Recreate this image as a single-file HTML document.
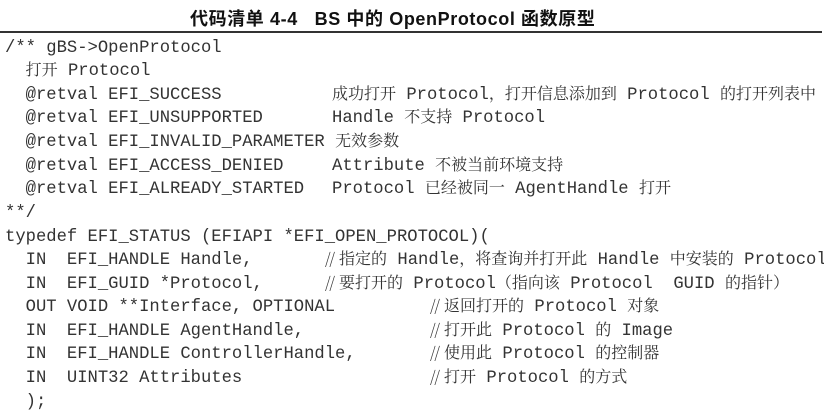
<!DOCTYPE html>
<html><head><meta charset="utf-8"><style>
body{margin:0;width:824px;height:417px;background:#fff;overflow:hidden;position:relative;color:#333}
.t{position:absolute;top:5px;left:190px;white-space:pre;font:bold 18px "Liberation Sans","Noto Sans CJK SC",sans-serif;color:#111;letter-spacing:0.6px}
.rule{position:absolute;left:0;top:31px;width:822px;height:2px;background:#333}
.l{position:absolute;white-space:pre;font:17.2px/23px "Liberation Mono","Noto Serif CJK SC",monospace;height:23px}
.l span.c{font-family:"Noto Serif CJK SC",serif;font-size:16px;line-height:0;vertical-align:0}
</style></head><body>
<div class="t">代码清单 4-4   BS 中的 OpenProtocol 函数原型</div>
<div class="rule"></div>
<div class="l" style="left:5px;top:37px">/** gBS-&gt;OpenProtocol</div>
<div class="l" style="left:5px;top:60px">  <span class="c">打开</span> Protocol</div>
<div class="l" style="left:5px;top:84px">  @retval EFI_SUCCESS</div>
<div class="l" style="left:332px;top:84px"><span class="c">成功打开</span> Protocol<span class="c">，打开信息添加到</span> Protocol <span class="c">的打开列表中</span></div>
<div class="l" style="left:5px;top:107px">  @retval EFI_UNSUPPORTED</div>
<div class="l" style="left:332px;top:107px">Handle <span class="c">不支持</span> Protocol</div>
<div class="l" style="left:5px;top:131px">  @retval EFI_INVALID_PARAMETER <span class="c">无效参数</span></div>
<div class="l" style="left:5px;top:155px">  @retval EFI_ACCESS_DENIED</div>
<div class="l" style="left:332px;top:155px">Attribute <span class="c">不被当前环境支持</span></div>
<div class="l" style="left:5px;top:178px">  @retval EFI_ALREADY_STARTED</div>
<div class="l" style="left:332px;top:178px">Protocol <span class="c">已经被同一</span> AgentHandle <span class="c">打开</span></div>
<div class="l" style="left:5px;top:202px">**/</div>
<div class="l" style="left:5px;top:226px">typedef EFI_STATUS (EFIAPI *EFI_OPEN_PROTOCOL)(</div>
<div class="l" style="left:5px;top:249px">  IN  EFI_HANDLE Handle,</div>
<div class="l" style="left:325px;top:249px"><span class="c">// 指定的</span> Handle<span class="c">，将查询并打开此</span> Handle <span class="c">中安装的</span> Protocol</div>
<div class="l" style="left:5px;top:273px">  IN  EFI_GUID *Protocol,</div>
<div class="l" style="left:325px;top:273px"><span class="c">// 要打开的</span> Protocol<span class="c">（指向该</span> Protocol  GUID <span class="c">的指针）</span></div>
<div class="l" style="left:5px;top:296px">  OUT VOID **Interface, OPTIONAL</div>
<div class="l" style="left:430px;top:296px"><span class="c">// 返回打开的</span> Protocol <span class="c">对象</span></div>
<div class="l" style="left:5px;top:320px">  IN  EFI_HANDLE AgentHandle,</div>
<div class="l" style="left:430px;top:320px"><span class="c">// 打开此</span> Protocol <span class="c">的</span> Image</div>
<div class="l" style="left:5px;top:343px">  IN  EFI_HANDLE ControllerHandle,</div>
<div class="l" style="left:430px;top:343px"><span class="c">// 使用此</span> Protocol <span class="c">的控制器</span></div>
<div class="l" style="left:5px;top:367px">  IN  UINT32 Attributes</div>
<div class="l" style="left:430px;top:367px"><span class="c">// 打开</span> Protocol <span class="c">的方式</span></div>
<div class="l" style="left:5px;top:391px">  );</div>
</body></html>
